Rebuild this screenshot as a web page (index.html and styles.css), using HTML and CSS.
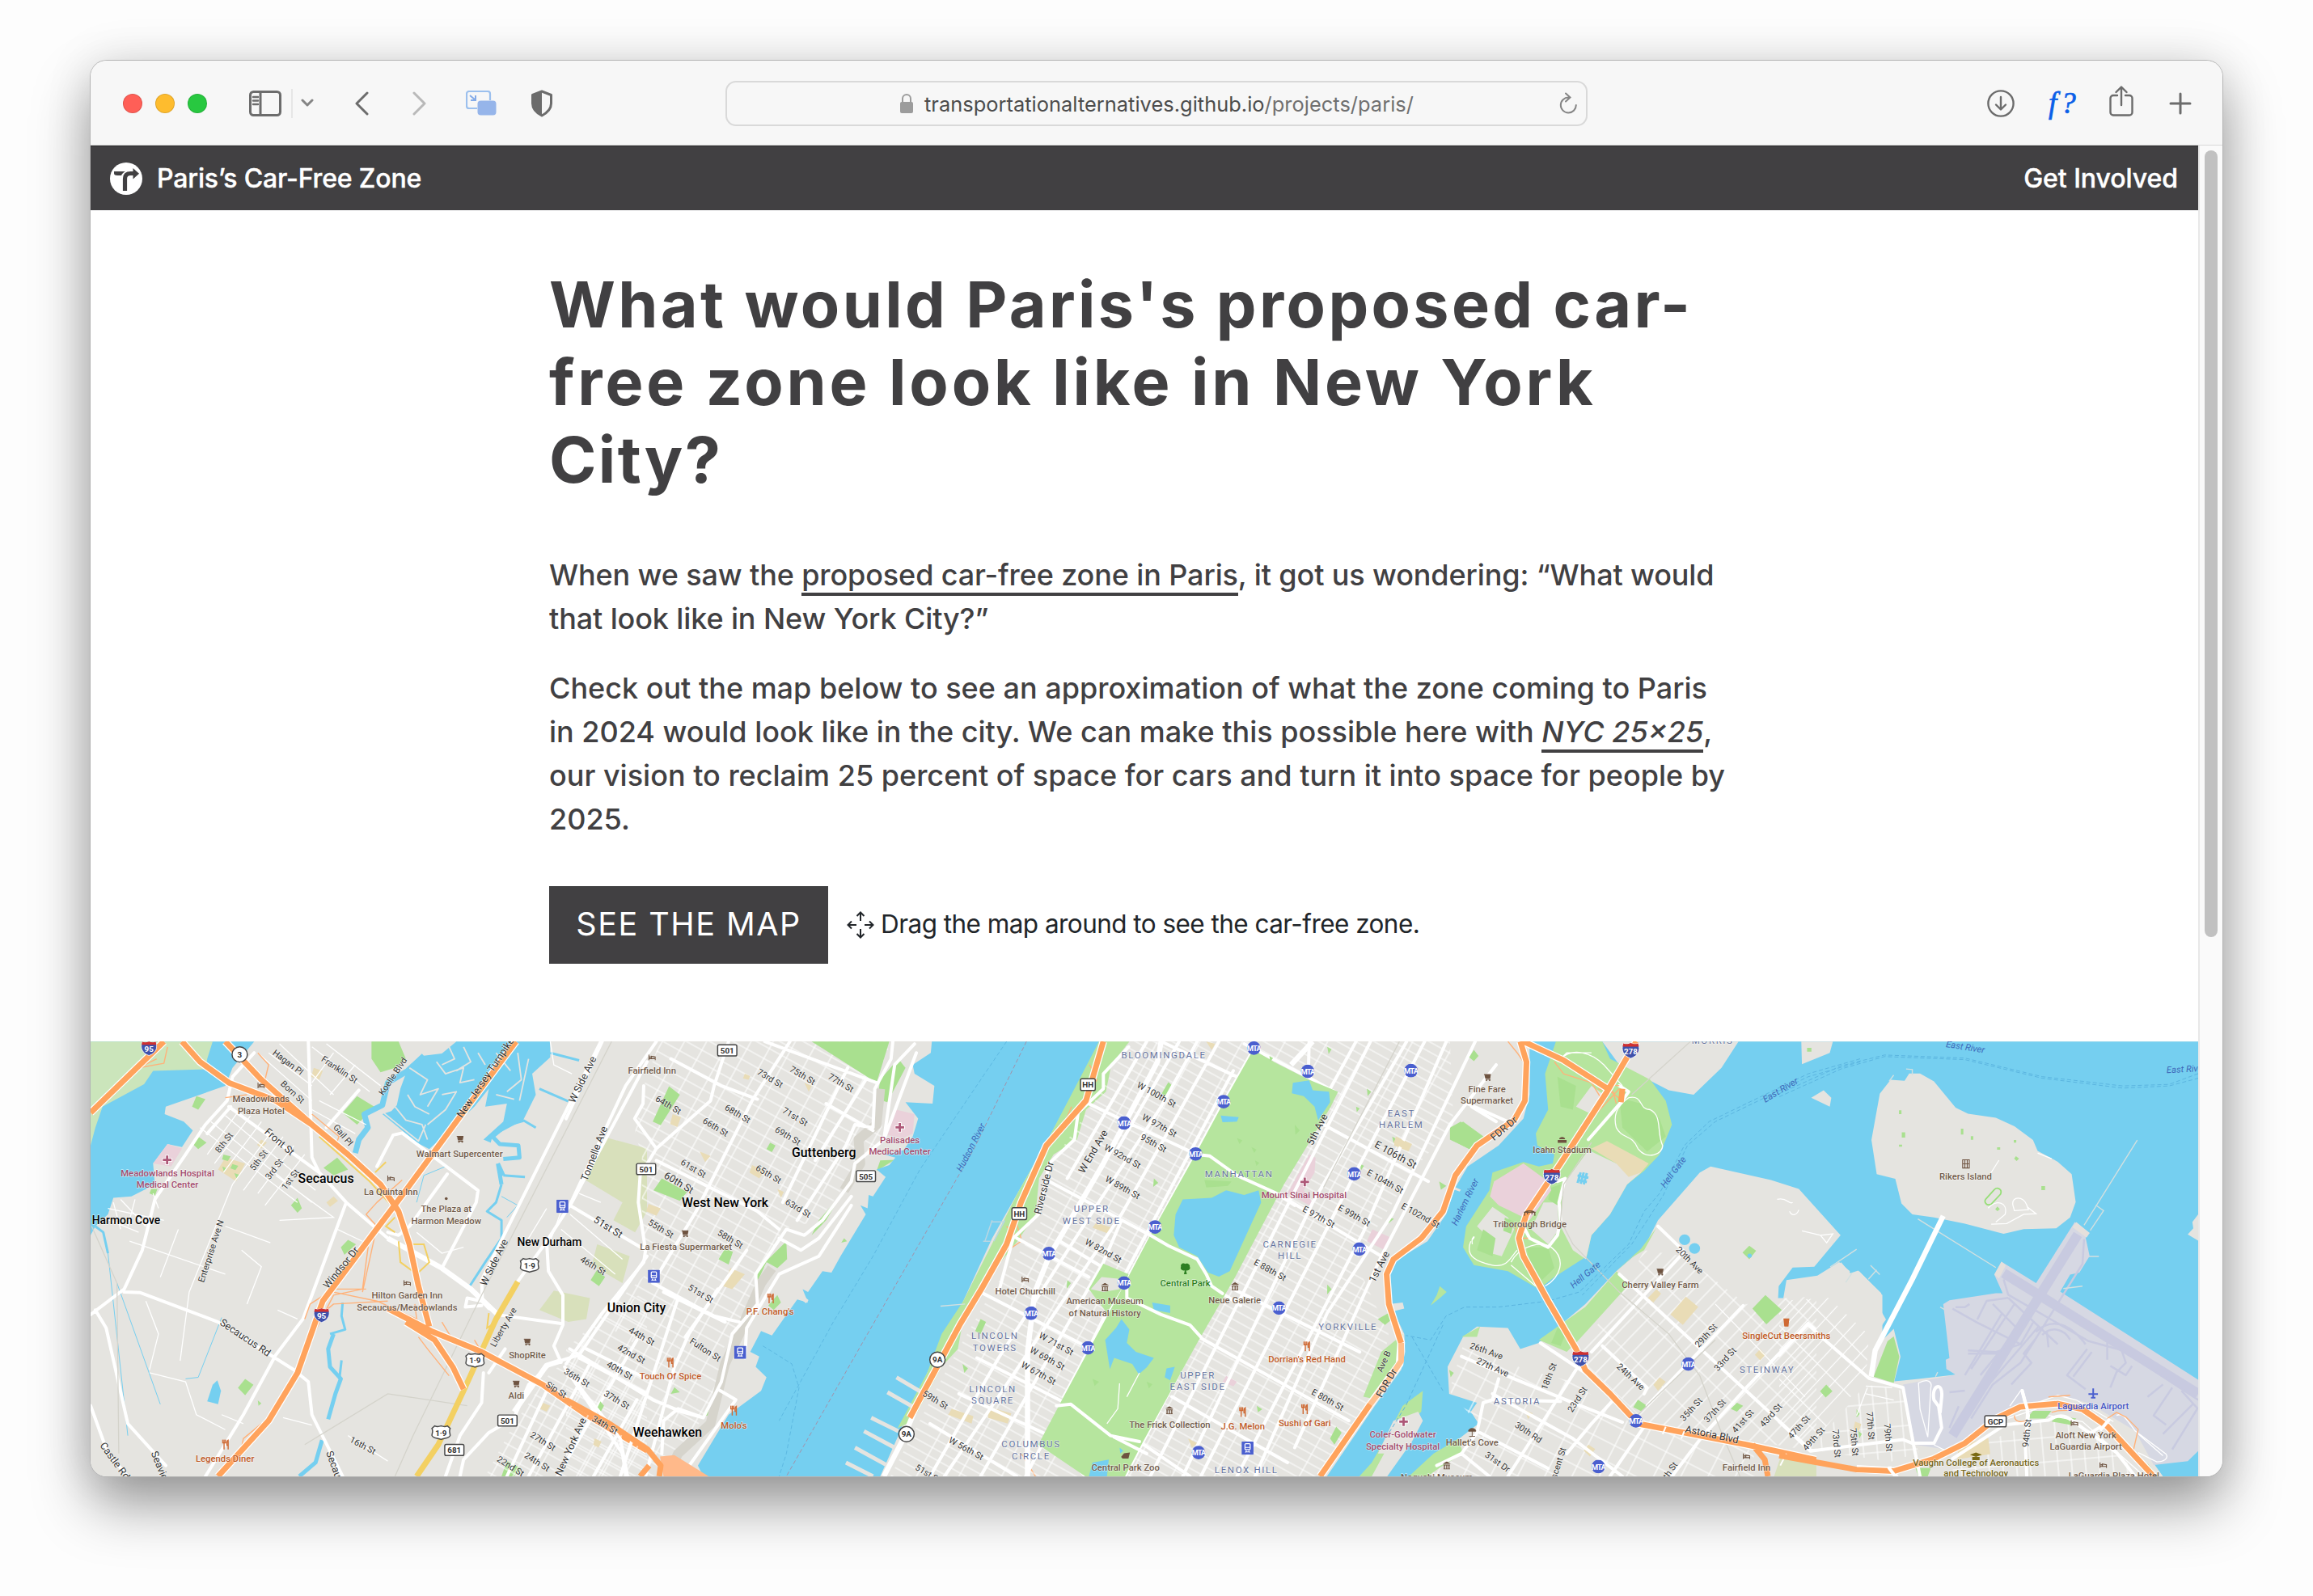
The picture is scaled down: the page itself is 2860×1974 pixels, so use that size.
FILE: index.html
```html
<!DOCTYPE html>
<html lang="en">
<head>
<meta charset="utf-8">
<title>Paris’s Car-Free Zone</title>
<link rel="stylesheet" href="styles.css">
</head>
<body>
<div class="window">
  <header class="toolbar">
    <div class="lights"><i class="red"></i><i class="amber"></i><i class="green"></i></div>
    <svg class="i-side" width="40" height="32" viewBox="0 0 40 32"><rect x="1.500" y="1.500" width="37" height="29" rx="4" class="s3"/><path class="s3" d="M14 1V31"/><path class="s2" d="M5 8h6M5 12.500h6M5 17h6"/></svg>
    <i class="divider"></i>
    <svg class="i-down" width="16" height="12" viewBox="0 0 16 12"><path class="s3 mid" d="M2 2l6 6 6-6"/></svg>
    <svg class="i-back" width="18" height="30" viewBox="0 0 18 30"><path class="s3" d="M16 2L3 15 16 28"/></svg>
    <svg class="i-fwd" width="18" height="30" viewBox="0 0 18 30"><path class="s3 pale" d="M2 2L15 15 2 28"/></svg>
    <svg class="i-pip" width="38" height="32" viewBox="0 0 38 32"><path d="M14 22H4a3 3 0 0 1-3-3V4a3 3 0 0 1 3-3h23a3 3 0 0 1 3 3v8" fill="none" stroke="#9cc0ee" stroke-width="2.200"/><rect x="14.500" y="12.500" width="23" height="18" rx="4" fill="#96b5ea"/><path d="M5 6l6 5M12 6v6H6" stroke="#84abe8" stroke-width="2" fill="none"/></svg>
    <svg class="i-shield" width="30" height="34" viewBox="0 0 30 34"><path class="s3" d="M15 2l11.500 4.500V17c0 7-4 11-11.500 15C7.500 28 3.500 24 3.500 17V6.500z"/><path fill="#6c6c6c" d="M15 2L3.500 6.500V17c0 7 4 11 11.500 15z"/></svg>
    <div class="address">
      <svg width="18" height="26" viewBox="0 0 18 26"><rect x="1" y="11" width="16" height="14" rx="2" fill="#9c9c9c"/><path d="M4 12V7a5 5 0 0 1 10 0v5" fill="none" stroke="#9c9c9c" stroke-width="2"/></svg>
      <span class="url">transportationalternatives.github.io<span>/projects/paris/</span></span>
      <svg class="reload" width="24" height="28" viewBox="0 0 24 28"><path d="M12.500 6.500A9.500 9.500 0 1 0 21.800 16M9 1.500l5.500 5-5.500 5" fill="none" stroke="#858585" stroke-width="2" stroke-linecap="round"/></svg>
    </div>
    <svg class="i-dl" width="34" height="34" viewBox="0 0 34 34"><circle class="s2" cx="17" cy="17" r="15.600"/><path class="s2" d="M17 9v15M11 18.500l6 6 6-6"/></svg>
    <span class="i-font">f?</span>
    <svg class="i-share" width="30" height="38" viewBox="0 0 30 38"><path class="s2" d="M10 12H5a3.500 3.500 0 0 0-3.500 3.500V33A3.500 3.500 0 0 0 5 36.500H25a3.500 3.500 0 0 0 3.500-3.500V15.500A3.500 3.500 0 0 0 25 12H20M15 24V2M8.500 8L15 1.500 21.500 8"/></svg>
    <svg class="i-plus" width="28" height="28" viewBox="0 0 28 28"><path class="s3" d="M14 2V26M2 14H26"/></svg>
  </header>

  <div class="viewport">
    <div class="page">
      <nav class="nav">
        <svg width="40" height="40" viewBox="0 0 40 40"><circle cx="20" cy="20" r="20" fill="#fff"/><path d="M18.500 35V20c0-4 2-6.500 7-6.500h4" fill="none" stroke="#414042" stroke-width="5.200"/><path d="M28.500 7l7.500 6.700-7.500 6.800z" fill="#414042"/><path d="M5 13.500c0 2 2 2.400 4 2.400h5c1-2 2.500-3.800 5-5H5z" fill="#414042"/></svg>
        <span class="brand">Paris’s Car-Free Zone</span>
        <span class="cta">Get Involved</span>
      </nav>
      <main class="intro">
        <h1><span class="l1">What would Paris's proposed car-</span><br><span class="l2">free zone look like in New York</span><br><span class="l3">City?</span></h1>
        <p class="lead">When we saw the <a>proposed car-free zone in Paris</a>, it got us wondering: “What would<br>that look like in New York City?”</p>
        <p>Check out the map below to see an approximation of what the zone coming to Paris<br>in 2024 would look like in the city. We can make this possible here with <a><em>NYC 25×25</em></a>,<br>our vision to reclaim 25 percent of space for cars and turn it into space for people by<br>2025.</p>
        <div class="actions">
          <button>SEE THE MAP</button>
          <svg width="34" height="34" viewBox="0 0 34 34"><path d="M17 2V12M17 22V32M2 17H12M22 17H32M12.500 6L17 1.500 21.500 6M12.500 28L17 32.500 21.500 28M6 12.500L1.500 17 6 21.500M28 12.500L32.500 17 28 21.500" fill="none" stroke="#212529" stroke-width="2"/></svg>
          <span>Drag the map around to see the car-free zone.</span>
        </div>
      </main>

      <svg class="map" width="2606" height="538" viewBox="112 1288 2606 538">
        <defs>
          <pattern id="st" width="46" height="11" patternUnits="userSpaceOnUse" patternTransform="scale(2.24 2.7034) rotate(29)"><path d="M0 5H46M20 0V11" class="pat"/></pattern>
          <pattern id="sn" width="24" height="14" patternUnits="userSpaceOnUse" patternTransform="scale(2.24 2.7034) rotate(29)"><path d="M0 5H24M12 0V14" class="pat"/></pattern>
          <pattern id="sq" width="15" height="46" patternUnits="userSpaceOnUse" patternTransform="scale(2.6133 2.7034) rotate(44)"><path d="M0 20H15M7 0V46" class="pat"/></pattern>
          <pattern id="sa" width="30" height="22" patternUnits="userSpaceOnUse" patternTransform="scale(2.6133 2.7034) rotate(27)"><path d="M0 10H30M15 0V22" class="pat"/></pattern>
          <pattern id="se" width="17" height="30" patternUnits="userSpaceOnUse" patternTransform="scale(2.6133) rotate(-5)"><path d="M0 15H17M8 0V30" class="pat"/></pattern>
          <symbol id="mta" viewBox="-9 -9 18 18"><circle r="8.800" fill="#4a5fcf"/><text class="mta-t" x="0" y="3.800">MTA</text></symbol>
          <symbol id="train" viewBox="0 0 16 18"><rect width="16" height="18" rx="1" fill="#4a5fcf"/><rect x="4.500" y="3" width="7" height="8" rx="1" fill="none" stroke="#fff" stroke-width="1.400"/><path d="M4.500 8h7M5 15l1.500-3M11 15l-1.500-3M5 14h6" stroke="#fff" stroke-width="1.200"/></symbol>
          <symbol id="is" viewBox="0 0 24 22"><path d="M2 1c3 1.500 7 1 10-.5C15 2 19 2.500 22 1c4 9 0 17-10 20.500C2 18 -2 10 2 1z" fill="#3f51ab" stroke="#fff"/><path d="M2 1c3 1.500 7 1 10-.5C15 2 19 2.500 22 1l1 4.500H1z" fill="#d0302f"/></symbol>
          <symbol id="us" viewBox="0 0 26 20"><path d="M5 1.500c3 1.500 5 1 8 0 3 1 5 1.500 8 0l3.500 3c-2 4 0 6 0 9-1 4-8 3-11.500 5-3.500-2-10.500-1-11.500-5 0-3 2-5 0-9z" fill="#fff" stroke="#4a4a4a" stroke-width="1.500"/></symbol>
          <symbol id="cart" viewBox="0 0 10 9"><path d="M0 1h8l-.8 4.500H2L1.300 2M2 7h6" fill="#6e5340" stroke="#6e5340"/><circle cx="3" cy="8" r="1" fill="#6e5340"/><circle cx="7" cy="8" r="1" fill="#6e5340"/></symbol>
          <symbol id="bed" viewBox="0 0 10 8"><path d="M.7 0V8M.7 5.800H9.500V8M9.500 6V3.500L4 2.500V5.500" fill="none" stroke="#6e5340" stroke-width="1.300"/><circle cx="2.400" cy="3.500" r="1" fill="#6e5340"/></symbol>
          <symbol id="fork" viewBox="0 0 9 12"><path d="M.7 0v4h3.600V0M2.500 0v12M7.500 12V.7C6 1.500 5.700 4 6 7h1.500" fill="none" stroke="#cf6a34" stroke-width="1.400"/></symbol>
          <symbol id="mus" viewBox="0 0 10 10"><path d="M0 3L5 0l5 3zM1 4h8v1H1zM1 9h8v1H1zM1.500 5h1.300v4H1.500zM4.400 5h1.300v4H4.400zM7.200 5h1.300v4H7.200z" fill="#6e5340"/></symbol>
          <symbol id="med" viewBox="0 0 12 12"><path d="M6 0v12M0 6h12" stroke="#fff" stroke-width="4"/><path d="M6 1v10M1 6h10" stroke="#ad5777" stroke-width="2.600"/></symbol>
        </defs>
        <rect x="112" y="1288" width="2606" height="538" fill="#e5e4e0"/>

        <!-- Secaucus and the Meadowlands -->
        <g class="g" transform="translate(100 1280) scale(.44643 .3699)">
          <path class="w" d="M27 22H480L420 110 400 170 330 200 235 240 232 265 285 290 310 320 280 375 240 365 200 430 205 500 140 540 90 545 75 600 40 640 27 670Z"/>
          <path fill="#cbe5bb" d="M27 22H365L350 80 345 115 200 120 175 165 60 240 40 310 27 370Z"/>
          <path class="p" d="M805 22H880L900 80 870 110 830 125 805 80ZM765 205L820 245 785 275 765 300 725 260ZM710 410L740 450 700 470 672 445ZM320 205L345 215 325 250 308 240ZM325 340L348 360 325 382 310 365ZM600 545L612 580 600 595 582 570ZM740 685L762 700 730 735 720 710ZM455 1150L478 1170 455 1205 435 1180ZM1430 785L1452 810 1435 840 1412 820ZM1180 1425L1220 1450 1200 1476H1165ZM195 515L212 515 205 538 190 530ZM490 1222L500 1232 492 1240Z"/>
          <path fill="#d8e0bb" d="M1460 345L1568 380V590L1535 660 1475 620 1500 560 1390 480ZM1430 700L1520 740 1500 830 1415 770ZM1310 855L1410 880 1400 950 1350 960 1270 920Z"/>
          <path class="t" d="M645 110L670 120 660 150 638 140ZM400 410L455 430 430 490 380 450ZM500 350L515 360 500 380 488 368ZM700 540L712 555 690 575 680 560ZM1280 1230L1300 1240 1290 1260 1272 1250ZM1420 1350L1440 1360 1425 1380Z"/>
          <path class="p" d="M395 400l20 6-8 16-16-6zM420 432l16 6-8 14-14-6zM392 440l12 6-8 12zM425 462l14 6-8 12z"/>
          <path fill="#ead1da" d="M240 365L280 380 250 440 200 430Z"/>
          <path class="w" d="M1040 22H1300V75L1250 130 1260 200 1225 285 1140 340 1135 360 1115 350 1170 290 1180 230 1120 240 1130 180 1090 240 965 382 930 360 835 265 860 255 875 235 885 180 900 130 945 70 1000 62Z"/>
          <path class="w" d="M378 1155L388 1190 380 1235 350 1225 365 1170Z"/>
          <path class="rv" stroke-width="7" d="M950 70L905 120 850 160 835 235 785 265 795 310 770 350 760 395"/>
          <path class="rv" stroke-width="5" d="M1225 285L1180 300 1140 340 1160 365 1212 370 1215 410 1170 415M1170 470L1155 430M1155 430L1165 500M700 1000L685 1050 690 1110 720 1150 705 1200 685 1285M668 1355L650 1430 605 1476"/>
          <path class="rv" stroke-width="3" d="M1230 475L1170 470M1165 500L1150 560 1125 590 1165 620 1165 680 1120 760 1078 838M725 895L722 940 732 985 690 1000M722 1088L716 1150M1300 60L1380 85M1270 180L1350 222M1225 285L1260 310M40 640L62 660 75 730"/>
          <path class="rv" stroke-width="1" d="M75 730L130 1340M930 560L950 470 1010 440M390 945L325 1145 290 1150M100 830L220 1235M1165 540L1210 570 1180 610"/>
          <path class="mk" d="M910 110L960 150 940 200 990 180 960 240M985 90L1010 130 1060 110 1050 160 1090 150M1000 200L1040 190 1010 250 960 300M1150 60L1190 120M1210 60L1220 150 1180 190M1240 80L1215 220M870 240L900 285 945 300 960 350M1060 40L1080 90 1040 120M840 262L935 355 955 300M905 200L925 240 965 265M1020 40L1035 80 1000 100M1100 60L1120 100M1150 200L1200 215"/>
          <path class="m" d="M490 60L640 220M520 60L640 170M550 30L700 200M640 40L800 190M680 30L830 170M700 60L640 160M760 100L690 200M440 250L350 400M470 270L370 430M500 290L395 460M530 320L420 500M560 340L450 520M590 370L490 530M620 400L510 570M330 310L600 560M360 290L640 560M400 270L650 520M640 250L760 330M660 220L790 300M75 580L230 620M110 550L180 640M60 610L160 660M90 560L110 650M150 550L130 640M200 530L215 580M135 690L400 800M420 500L300 860 275 1090M270 650L220 810M400 640L525 695M445 720L500 775 460 900M190 1120L215 1000 180 890M190 1130L290 1160 320 1270 400 1320M545 920L600 950M710 650L780 690M930 660L1000 730 1060 710M540 470L700 610 550 620M390 1270L450 1300M560 1280L640 1305M740 1340L850 1425M1380 530L1440 560M1330 590L1300 690M1355 600L1500 750M1330 650L1480 800M1290 580L1230 700M1300 22L1310 100 1360 130"/>
          <path class="r" d="M630 22L640 410 660 460 735 560 850 680 1000 780 1080 850 1130 915M410 240L660 460M480 60L420 140 405 220 345 300 290 400 205 550 170 720 120 850 27 935M350 330L415 240M735 560L640 870 615 950 540 1070 450 1270 345 1476M120 860L165 862 380 960 590 1120 630 1160 640 1270 725 1476M40 920L70 980 130 1300 235 1440M27 1240L75 1400 130 1476M680 310L770 185M820 440L865 335 890 328 1100 520 1095 560 1000 780M1015 465L910 640 880 670 850 660M1440 22L1180 650 1110 820 1112 890M1568 90L1360 560 1290 690 1210 825M1290 690L1295 790 1335 870V970L1310 1040 1330 1095M1150 935L1330 965M1110 890L1070 880 1065 910 1110 905M1115 1130L1110 1230 1050 1340 1010 1476M1130 1130L1175 1050M1380 1080L1568 1200M1400 1050L1568 1150M1568 740L1380 1070 1300 1100 1240 1170 1200 1280 1130 1330 1060 1420 1050 1476M1300 1165L1180 1476M1340 1110L1500 1400 1510 1476M1410 1100L1240 1476M1540 1020L1320 1476M1540 1220L1420 1476"/>
          <path class="b" d="M850 680L1000 780 1080 850 1150 930M1330 1090L1290 1105 1200 1260"/>
          <path class="rail" d="M1470 22L1110 870 920 1340 870 1476M620 1370L850 1200 1070 1240M30 640L100 830 105 1400"/>
          <path fill="url(#sn)" d="M1380 1060L1568 1150V1476H1120L1200 1300 1300 1130ZM1568 850L1440 960 1568 1060Z"/>
          <path class="yw" stroke-width="7" d="M1210 825L1150 950 1060 1190 990 1370 930 1476"/>
          <path class="yw" stroke-width="2" d="M660 340L800 490 860 570M880 580L905 690 945 860 965 960M845 425L815 460M870 610L845 640 870 660M880 690L885 760 930 800 965 760 950 700 920 700M1130 930L1125 980 1150 960"/>
          <path class="ramp" d="M490 60L520 100 510 150M400 210L460 200M640 265L715 340 705 370M890 485L820 560 790 600 820 640 780 860M240 40L230 95 160 110 210 80M620 950L635 900 700 850 790 850M640 960L700 900 850 890M645 1000L700 870 780 850 800 670M700 860L820 890 930 950M925 900L930 950 970 1010M935 1010L960 1050 1020 1140M1000 960L1030 1020M1090 1020L1110 1060M500 1300L450 1350 440 1410"/>
          <path class="case" d="M27 260L230 22M280 22L330 90 410 160 540 220 640 300 740 400 830 500 880 590 910 700 935 840 965 975M400 22L500 150 640 300M1205 22L1040 290 900 520 800 680 670 890 600 1130 520 1290 380 1476M850 915L970 990 1110 1060 1280 1170 1400 1270 1568 1390M900 960L980 1020 1030 1110 1060 1185"/>
          <path class="h" d="M27 260L230 22M280 22L330 90 410 160 540 220 640 300 740 400 830 500 880 590 910 700 935 840 965 975M400 22L500 150 640 300M1205 22L1040 290 900 520 800 680 670 890 600 1130 520 1290 380 1476M850 915L970 990 1110 1060 1280 1170 1400 1270 1568 1390M900 960L980 1020 1030 1110 1060 1185"/>
        </g>

        <!-- Union City, West New York and the Hudson -->
        <g class="g" transform="translate(700 1280) scale(.44643 .3699)">
          <path fill="url(#sn)" d="M260 22H900L850 180 880 330 800 460 700 620 600 650 520 850 480 960 430 1060 420 1200 380 1280 260 1476H0V1050L240 780 210 640V400L190 330 220 150Z"/>
          <path class="p" d="M680 22H895L860 160ZM920 80L940 110 890 225 862 215 870 150ZM285 172L315 200 262 302 240 290ZM265 480L335 525 315 555 242 520ZM440 715L462 725 450 768 422 750ZM610 690L612 750 585 780 555 760 520 850 535 780ZM765 530L720 620 680 670 700 620ZM585 870L595 895 575 920 560 905ZM300 1178L315 1195 290 1200ZM95 1225L105 1240 95 1262 85 1250ZM870 420L910 418 860 455ZM430 1180L400 1270 385 1275ZM770 680L778 690 762 695ZM565 360L580 370 570 392 555 382Z"/>
          <path class="t" d="M370 390L400 405 385 425ZM515 435L550 455 535 480 508 460ZM228 565L262 580 250 605 222 590ZM295 265L318 275 308 308 288 298ZM455 780L495 800 460 850 435 840ZM660 160L680 170 672 190ZM80 1350L98 1360 90 1380 75 1370ZM495 130L510 138 505 150 490 145ZM585 515L603 525 595 545Z"/>
          <path class="hill" stroke-width="12" d="M870 180L860 300 810 350 815 430 770 520M570 780L540 830 500 940 480 1000 440 1100 400 1300 310 1400 280 1476"/>
          <path class="w" d="M1013 22L1010 60 960 100 965 130 1020 170 1015 230 940 225 975 280 960 340 935 385 880 400 912 410 895 435 860 450 885 475 850 540 838 535 835 580 815 570 830 600 760 740 735 795 710 790 670 860 655 850 670 895 640 885 570 1005 540 990 510 1060 535 1075 525 1110 555 1145 540 1190 450 1270 410 1350 365 1440 380 1476H870L920 1340 940 1280 1000 1130 1100 890 1180 680 1250 530 1330 360 1450 90 1476 22Z"/>
          <path fill="#ead1da" d="M915 250L965 265 960 330 935 345 890 335Z"/>
          <path class="p1" d="M1476 22H1560L1510 100 1495 190 1440 250 1415 350 1350 400 1310 480 1300 600 1250 690 1190 780 1150 860 1100 950 1085 1050 1040 1110 960 1290 918 1315 1000 1130 1040 1000 1100 890 1250 530 1330 360Z"/>
          <path class="pier" d="M915 1145L985 1195M890 1195L970 1250M845 1280L920 1325M825 1325L910 1380M800 1380L890 1440M775 1430L850 1476M640 865L668 892"/>
          <path class="pier2" d="M1037 907L1105 900"/>
          <path class="r" d="M100 22L0 280M250 22L165 170 10 570M215 170L213 230 190 280 220 330 250 380M290 80L430 170 530 215M450 22L410 170 400 220 250 380 205 470 200 560 220 720 215 760 100 930 0 1100M620 22L515 220 360 590 240 830M905 22L900 80 855 180 850 310 800 300 775 370 640 620M965 30L910 100 880 350 800 430 790 490 710 620 660 670 610 650 525 800 530 900 460 1000 430 1160 380 1280 310 1250 270 1290 265 1400M970 60L880 350M790 540L700 680 650 720 590 680M790 570L700 740 590 800 500 980 495 1080M550 22L860 160M720 230L850 320M250 420L530 590 590 650M10 570L220 720M240 830L410 940 480 960M270 860L440 960M420 850L340 1000 300 1110 220 1476M310 880L150 1476M10 1050L240 1220 320 1260 380 1280M420 1185L470 1220 400 1340 320 1476M0 1120L150 1350 170 1476M500 720L330 1010M780 110L600 560M830 150L690 420"/>
          <path class="dash" stroke="#a391a9" d="M1275 22L1130 380 830 1010 610 1476"/>
          <path class="dash" stroke="#5db9e2" d="M1220 22L980 450 850 740 740 960 590 1290M545 1040L625 1100 645 1180 610 1400 590 1476"/>
          <path fill="#ffb98a" d="M260 1410L300 1405 395 1476H270Z"/>
          <path class="hh" d="M0 1220L120 1300 225 1385 262 1440 258 1476M205 1476L230 1440"/>
          <path class="ramp" d="M1450 100L1470 150 1440 210M1400 240L1375 310M1220 640L1260 690 1200 740M1240 600L1260 680M1260 1400L1300 1476"/>
          <path fill="none" stroke="#b9d6e2" stroke-width="1.500" d="M1180 620L1160 690M1215 620L1185 690M1180 625H1215M1155 690H1175"/>
        </g>

        <!-- Manhattan and Central Park -->
        <g class="g" transform="translate(1150 1280) scale(.44643 .3699)">
          <path fill="url(#st)" d="M550 22H1440L1450 300 1340 450 1250 620 1180 760 1270 1000 1240 1200 1070 1476H-110L50 1110 170 860 310 620 330 440 480 180Z"/>
          <path class="p" d="M660 158L672 170 655 210 642 195ZM620 480L632 495 618 508ZM1440 310L1470 290 1540 350 1510 390 1440 350ZM140 950L155 960 140 1000 125 990ZM90 1100L105 1115 95 1130ZM1270 610L1285 615 1270 630ZM1270 930L1280 950 1260 970 1240 950ZM1125 1310L1140 1330 1120 1370 1108 1350ZM905 1240L920 1252 908 1262ZM1100 835L1112 850 1100 868ZM1410 490L1430 505 1415 518ZM1210 180L1222 190 1212 205ZM380 820L390 830 378 850ZM1280 340l12 8-8 14zM1180 240l10 6-8 12zM1100 40l12 8-8 16zM1190 430l12 8-8 14z"/>
          <path class="t" d="M460 628L505 645 495 665 450 645ZM60 1250L120 1275 115 1300 50 1270ZM165 1245L225 1265 215 1300 160 1280ZM1290 340L1335 365 1325 390 1285 370ZM715 1350L740 1365 725 1380ZM765 22L790 30 780 50Z"/>
          <path fill="#ead1da" d="M1050 400L1068 410 1065 460 1035 520 1060 560 1050 570 990 530ZM1225 650L1280 680 1260 720 1210 690ZM820 1140L850 1160 840 1175 810 1160Z"/>
          <path class="p1" d="M1250 1060L1310 1000 1310 1090 1240 1220 1200 1210Z"/>
          <path class="b" d="M1060 22L1000 100M640 22L630 90 480 430 330 740 290 860 270 1060V1476"/>
          <path class="r" d="M600 22L380 480M740 22L640 240 440 610 190 1080 0 1476M800 22L530 600 40 1476M690 22L510 400M550 40L480 130 480 180 410 260 400 350 330 430 300 600 230 680 190 860M530 620L480 760 140 1476M840 120L540 800 310 1370 265 1476M895 50L820 210 540 830 370 1210M1180 22L990 440 590 1360 540 1476M1220 22L610 1476M1320 22L1060 560 700 1476M1370 22L1170 480 750 1476M1430 22L1200 660 850 1476M1510 22L1280 600 1100 930 900 1476M1568 100L1440 300 1250 740 1010 1380M1050 22L1048 120M440 230L560 300 740 400M330 490L610 670M870 30L1060 150 1120 190M640 22L850 140M1090 300L1380 490M920 500L1250 740M240 680L440 810M360 690L550 830M140 860L430 1040M780 840L860 905M840 850L1190 1060M730 1000L1160 1290M130 1080L390 1240M670 1210L990 1430M580 1360L720 1476M80 1200L330 1340 430 1476M0 1300L240 1476M1500 240L1568 290"/>
          <path class="p1" d="M895 50L960 95 1050 150 1130 190 1110 240 980 500 845 810 740 1030 590 1360 540 1476H430L300 1370 370 1210 540 830 610 670 735 400 820 210ZM480 765L550 800 540 830 490 930 440 850Z"/>
          <path fill="#e5e4e0" d="M475 810L520 815 525 850 480 860 445 850Z"/>
          <path class="p" d="M940 70l10 8-8 12zM1010 300l14 20-12 14zM850 345l15 8-8 12zM890 375l14 8-6 12zM870 460l15 10-12 12zM900 420l12 8-8 10zM450 1150l18 10-12 14zM600 1160l16 8-10 14zM760 485l75 5-10 15-60 5z"/>
          <path class="w" d="M700 550L780 545 820 520 870 535 910 520 917 560 830 790 800 808 770 795 740 740 690 710 675 670 680 600ZM1005 160L1050 152 1060 185 1105 190 1108 225 1075 285 1065 240 1035 205 1002 195ZM805 270L855 275 850 290 810 292ZM530 950L552 985 545 1030 570 1060 620 1080 600 1112 578 1135 560 1100 510 1080 498 1118 485 1020 515 980ZM615 895L665 905 665 930 620 920ZM655 1115L678 1110 665 1155 650 1145ZM450 1430L495 1420 490 1476H440ZM525 1380L535 1390 527 1400Z"/>
          <path class="r" d="M740 400L775 405 850 470 960 530 1010 570M610 670L660 705 740 750 765 800 780 840 810 865M545 830L545 880 640 935 720 970 750 1010M350 1240L390 1235 500 1340 580 1360M510 1345L600 1400"/>
          <path class="m" d="M580 1130L545 1210M525 1165L520 1250 490 1300"/>
          <path class="rail" d="M1300 22L1090 510"/>
        </g>

        <!-- Highway along the Hudson, over the west side parks -->
        <g class="g" transform="translate(700 1280) scale(.44643 .3699)">
          <path class="b" d="M975 1230L930 1360 880 1476"/>
          <path class="case" d="M1488 22L1440 220 1330 370 1260 560 1220 700 1150 850 1090 970 952 1280"/>
          <path class="h" d="M1488 22L1440 220 1330 370 1260 560 1220 700 1150 850 1090 970 952 1280"/>
        </g>

        <!-- East River, islands and Astoria -->
        <g class="g" transform="translate(1700 1280) scale(.38265 .3699)">
          <path class="w" d="M500 22V200L480 280 400 370 300 440 260 510 230 600 170 690 60 760 50 800 50 900 95 1000 98 1060 85 1120 0 1240-155 1476H2670V22Z"/>
          <path fill="#e5e4e0" d="M45 900L90 895 95 915 55 925ZM735 22H1175L1120 110 1030 200 950 185 790 100ZM1378 22H1480L1470 60 1380 98ZM1410 210L1450 185 1475 210 1470 240ZM250 505L278 518 274 524 250 515Z"/>
          <path class="p1" d="M585 22H735L760 80 890 150 940 220 960 300 920 400 870 455 815 500 760 600 700 670 685 740 580 810 530 850 430 790 320 770 285 710 295 640 370 520 380 460 480 425 530 440 575 430 580 400 525 370 520 330 560 250 550 130ZM210 840L232 860 210 880 180 905 200 870Z"/>
          <path fill="#e5e4e0" d="M690 385L780 430 860 460 815 500 760 600 700 670 682 750 640 720 600 640 610 500ZM380 575L430 610 450 650 410 740 375 730 380 690 330 640ZM700 170L740 200 690 260 650 240ZM545 560L590 560 595 650 560 700 505 650Z"/>
          <path class="p" d="M590 140L650 170 640 250 600 240ZM790 210L860 230 920 280 940 340 880 390 800 310ZM350 650L390 680 380 740 330 720ZM420 610L450 625 440 665 415 655ZM490 710L560 710 580 780 540 820 500 760ZM570 510L600 500 590 570 560 550Z"/>
          <path class="t" d="M700 380L750 355 885 430 860 460 820 475 780 430Z"/>
          <path fill="#ead1da" d="M372 540L385 490 480 430 560 490 570 520 500 620 400 570Z"/>
          <path class="rv" stroke-width="3" d="M665 460L655 495M675 460L665 498M685 462L675 500M655 470L690 478M655 485L685 492"/>
          <path fill="#e5e4e0" d="M915 620L1050 460 1085 440 1280 485 1370 515 1505 670 1420 775 1350 778 1305 840 1303 880 1320 880 1330 820 1430 805 1500 760 1535 790 1525 825 1565 790 1640 870V1476H130L200 1420 260 1360 335 1300 310 1260 330 1230 240 1200 235 1110 285 1010 330 975 430 980 470 1050 530 1030 680 900 780 790 870 710Z"/>
          <path fill="url(#sq)" d="M870 720L1000 740 1200 900 1330 880 1520 870 1568 880V1290L1440 1300 1410 1390 880 1300 640 1060 780 900Z"/>
          <path fill="url(#sa)" d="M290 1020L400 1090 530 1130 640 1160 830 1300 960 1320 1220 1390 1240 1476H160L290 1400 340 1310 240 1190Z"/>
          <path class="p1" d="M910 645L870 720 830 745 780 790 825 830 650 1030 620 1060 530 1020 680 910 790 780 860 715ZM155 1190L150 1260 80 1330 60 1400 30 1440-10 1476H-50L-10 1430 40 1340 90 1240ZM270 1350L285 1400 220 1440 170 1476H110L190 1400ZM340 975L330 1010 280 1010Z"/>
          <path fill="#e5e4e0" d="M60 1290L140 1260 155 1290 120 1360 40 1476H-10L30 1400 10 1400Z"/>
          <path class="p" d="M1262 870L1315 920 1265 968 1220 915ZM1210 705L1232 722 1210 750 1188 728ZM1460 1170L1480 1190 1455 1210 1440 1190ZM590 980L620 990 600 1040 570 1030ZM240 1120L255 1130 245 1145ZM250 320L285 290 365 350 320 390 245 350ZM850 1220L880 1240 860 1258 835 1245ZM1170 1230L1190 1240 1170 1260 1150 1250ZM320 50L335 70 320 88 305 75Z"/>
          <path class="t" d="M1005 875L1045 910 995 970 955 935ZM910 850L925 865 900 895 882 880ZM920 1145L940 1160 915 1190 900 1170ZM1245 1050L1262 1070 1245 1088 1228 1070ZM690 1370L712 1385 695 1410 675 1390ZM485 1255L510 1265 495 1285ZM70 340L110 365 100 385 60 360Z"/>
          <path fill="#d8e0bb" d="M1310 1415L1568 1460V1476H1290Z"/>
          <circle class="w" cx="1001" cy="685" r="18"/><circle class="w" cx="1033" cy="714" r="18"/><circle class="w" cx="1211" cy="738" r="7"/>
          <path class="m" d="M600 80C640 40 700 60 740 100L800 170M590 90L620 60 700 60M820 210C870 200 850 250 890 250 930 270 910 330 930 370 930 400 880 420 850 380 830 330 800 350 780 310 770 270 780 240 820 210M310 690C290 740 330 760 380 770 430 780 440 740 460 720M440 760C470 700 540 690 570 710 620 750 600 810 550 840M440 770L520 840M315 685C330 670 310 670 315 700M1300 550C1330 540 1340 570 1350 560M1340 590C1350 610 1365 600 1370 585M1380 655L1440 670 1480 665 1460 695 1440 670M1100 900L1390 1210"/>
          <path class="r" d="M480 640L500 680 560 710 590 670 600 620 595 560 615 480 590 490M690 350L800 220 820 190 790 170M915 640L1000 725 700 1060M790 800L1200 1190 1410 1390 1568 1375M1190 905L880 1240M1400 965L1200 1180 1060 1340 960 1476M1400 965L1568 1110M535 1030L680 1130 840 1290M280 1075L450 1150 640 1230 800 1295M650 1120L430 1476M735 1040L880 1180 870 1200M400 1150L380 1220 350 1230 330 1330 280 1400 200 1440M380 1200L640 1350 800 1476M340 1330L560 1450M600 1225L380 1220M280 1400L370 1476M620 1400L700 1300 780 1210M870 1310L760 1476M300 230L430 290"/>
          <path class="rail" d="M1020 22L830 200M700 360L610 500 600 620 640 700 790 860 950 1000 1050 1140 1120 1330 1180 1476M840 1280L1100 1020"/>
          <path class="dash" stroke="#5bb5e0" d="M1568 80L1400 130 1220 220 1080 290 1000 370 920 530 870 590 820 700 660 860 560 890 400 910H290L230 940 180 1020 100 1005M1568 90L1400 140 1100 290 1010 370 930 540 830 700 670 870M120 1010L220 1190M220 970L100 1240 40 1340"/>
          <path class="ramp" d="M430 22L460 60 480 90M580 90L610 130 700 160 790 170M590 70L700 140 800 220M700 160L730 210 690 290M720 180L770 190 780 230M640 380L700 280 790 180M455 640L460 680H495"/>
          <path class="case" d="M470 22L490 90 485 220 450 285 330 370 260 470 220 590 150 680 60 750 38 800 45 900 85 1030 80 1100-15 1235-177 1476M480 22L610 85 760 185M845 22L750 190 600 430 490 600 465 680 480 740 560 890 650 1050 680 1120 760 1200 850 1300 1200 1370 1400 1415 1580 1455"/>
          <path class="h" d="M470 22L490 90 485 220 450 285 330 370 260 470 220 590 150 680 60 750 38 800 45 900 85 1030M-15 1235L-177 1476M480 22L610 85 760 185M800 180L795 225M845 22L750 190 600 430 490 600 465 680 480 740 560 890 650 1050 680 1120 760 1200 850 1300 1200 1370 1400 1415 1580 1455M1220 1370L1260 1420 1270 1476"/>
          <path class="h faded" d="M85 1030L85 1090 40 1160-15 1235"/>
          <path stroke="#fff" stroke-width="2" fill="none" d="M940 1310L930 1335M1000 1325L990 1350M1330 1400L1310 1440"/>
        </g>

        <!-- Rikers Island and LaGuardia -->
        <g class="g" transform="translate(2200 1280) scale(.38265)">
          <path fill="#e5e4e0" d="M325 190L360 145 405 148 420 125 455 125 500 150 570 235 610 255 700 268 760 295 820 340 835 375 900 410 945 450 958 540 940 590 895 625 790 628 725 643 600 610 500 590 430 580 395 545 375 465 315 450 298 340ZM200 735L230 770 255 762 330 835 300 880 325 885 345 920 310 970 330 990 370 950 392 1040 372 1120 450 1112 570 1098 1000 1100 1150 1260 1212 1388 1240 1427H120V800ZM1354 580L1335 605 1338 625 1320 645 1354 665Z"/>
          <path fill="url(#se)" d="M280 1130L400 1150 450 1350 360 1380 100 1340ZM560 1360L830 1250 950 1240 1180 1427H560Z"/>
          <path fill="url(#sq)" d="M0 860L160 850 290 970 280 1110 100 1330 0 1250Z"/>
          <path fill="#d6d8e3" d="M530 870L550 858 700 835 722 835 695 775 718 733 830 802 955 605 1003 640 990 655 1003 715 970 768 940 775 908 830 1354 1115V1345L1320 1378 1210 1390 1150 1280 1000 1190 900 1165 790 1200 600 1310 540 1340 440 1325 400 1130 570 1098 540 1080 538 1050 550 1045Z"/>
          <path fill="#e5e0dc" d="M695 775L718 733 732 745 710 788ZM960 605L1003 640 993 655 948 622Z"/>
          <path class="run" stroke-width="12" d="M725 770L1354 1160"/>
          <path class="run" stroke-width="12" d="M965 645L560 1295"/>
          <path class="run" stroke-width="2.500" d="M725 790L740 840 1000 990 1110 1020 1354 1180M640 920L670 860 740 850M560 885L640 930 780 1000M570 880H600L615 870M610 1020L700 1025 780 1000 820 930M610 1030H740M620 1080L760 870M600 1100L720 900M650 1100L830 880M660 1150L840 940M985 660L980 740 780 1060 690 1130 620 1240M830 960C870 920 930 920 990 1000M850 970C880 940 920 950 940 985M830 980L790 1030 815 1060 750 1130M865 960L870 1010M995 1015L930 1100 990 1145M1010 1025L950 1105M1100 1000L1120 1060 1090 1090 1070 1140M1140 1070L1120 1100 1070 1070M1240 1130L1190 1170M1270 1140L1210 1230 1250 1260M1340 1190L1240 1290M1350 1210L1270 1340M550 1155L600 1150M580 1200L550 1270M740 850L900 1000M690 870L780 960M1060 990V1050M1300 1150L1354 1210"/>
          <path class="pier2" d="M1157 340L985 615M1023 550L1048 568 1005 632M448 595L700 752M165 750L250 693M295 745L325 775M315 760L288 790M215 800L235 770M918 820L980 812M1000 716H1033M355 150L370 130M430 130V112L410 110M520 880L535 888M505 1105L512 1090"/>
          <path class="p" d="M370 975L388 1040 370 1125 305 1105 350 990ZM152 1130L172 1152 150 1172 132 1152ZM90 42h14v12h-14zM387 244h8v12h-8zM396 315h11v17h-11zM387 355h10v6h-10zM587 303h8v19h-8zM619 327h8v12h-8zM704 363h10v8h-10zM765 392l10 8-8 8-8-8zM847 489h12v13h-12zM705 555l8 8-8 7-7-7zM758 340h8v8h-8zM820 1215H880L860 1240 800 1240ZM900 1230L960 1240 940 1260 880 1250ZM250 1210l10 15-10 12zM255 1280l12 10-8 14zM440 1400L490 1400 480 1427H450ZM1190 1385L1225 1427H1200Z"/>
          <path class="t" d="M245 1250L265 1258 258 1280 240 1275ZM580 1330L675 1300 682 1355 575 1372Z"/>
          <path fill="none" stroke="#97de78" stroke-width="1.800" d="M668 530L695 500C705 490 722 500 715 515L685 547C670 555 660 540 668 530Z"/>
          <path class="m" d="M710 405L685 445M675 560C700 530 740 540 730 580L700 605M755 550C750 520 790 520 800 550L805 565 760 568ZM800 555L830 578 790 580 735 610 685 612M835 382L880 400M280 1135L365 1140M280 1160L370 1180M285 1140L250 1230M450 1125C480 1110 495 1120 490 1140L480 1300 455 1210ZM500 1325L540 1345M745 1200L780 1150M830 1190L900 1165 960 1180 1080 1250M740 1240L860 1200M1090 1230C1110 1220 1120 1240 1150 1280L1250 1355C1260 1370 1240 1380 1220 1380L1160 1350M1160 1290L1240 1360M870 1230L980 1250 1180 1427"/>
          <path class="b" d="M530 585L430 790 310 1020 297 1105"/>
          <path class="r" d="M0 1035L92 935 140 980 290 1110 400 1140 435 1330 455 1427M0 1250L100 1345 400 1308 430 1320 500 1320 525 1270 515 1200 500 1180C490 1130 530 1120 525 1170L520 1220M785 1150L805 1230 795 1320 800 1427M560 1370L730 1260 870 1245C930 1210 940 1250 1010 1290L1090 1350 1150 1427M360 1400L380 1427M1000 1290L1050 1260"/>
          <path class="ramp" d="M760 1230C760 1250 780 1255 800 1245M880 1220L900 1215 1000 1210M1060 1240L1090 1220 1120 1235 1160 1275 1145 1340M870 1170L940 1165"/>
          <path class="case" d="M250 1403L370 1410 500 1370 600 1320 700 1240 780 1202 900 1192 980 1210 1060 1265 1210 1427"/>
          <path class="h" d="M0 1360L100 1378 250 1405 370 1410 500 1370 600 1320 700 1240 780 1202 900 1192 980 1210 1060 1265 1210 1427"/>
          <path class="r" d="M785 1150L803 1215 800 1260M355 1400L375 1427M1040 1275L1065 1245"/>
          <path class="dash" stroke="#5bb5e0" d="M0 190L200 100 340 65 600 75 850 135 1110 165 1260 160 1354 125M0 200L200 110 340 70 600 80 850 140 1110 172 1260 165 1354 140"/>
        </g>

        <!-- Labels and markers -->
        <g class="labels" transform="scale(1.82398)">
          <g class="city"><text x="221" y="802">Secaucus</text><text x="85.500" y="830" class="c2">Harmon Cove</text><text x="372.500" y="845" class="c2">New Durham</text><text x="431.500" y="890">Union City</text><text x="491.500" y="818.500">West New York</text><text x="558.500" y="784.500">Guttenberg</text><text x="452.500" y="974.500">Weehawken</text></g>
          <g class="hood"><text x="789" y="717.800">BLOOMINGDALE</text><text x="740" y="822">UPPER</text><text x="740" y="829.800">WEST SIDE</text><text x="840" y="798.500">MANHATTAN</text><text x="950" y="757">EAST</text><text x="950" y="764.800">HARLEM</text><text x="874.500" y="846">CARNEGIE</text><text x="874.500" y="853.500">HILL</text><text x="913.800" y="901.800">YORKVILLE</text><text x="674.500" y="908">LINCOLN</text><text x="674.500" y="916">TOWERS</text><text x="673" y="944">LINCOLN</text><text x="673" y="952">SQUARE</text><text x="699" y="981.500">COLUMBUS</text><text x="699" y="989.500">CIRCLE</text><text x="812" y="934.500">UPPER</text><text x="812" y="942.500">EAST SIDE</text><text x="845" y="999">LENOX HILL</text><text x="1028.500" y="952.500">ASTORIA</text><text x="1198" y="931">STEINWAY</text><text x="1161" y="708">MORRIS</text></g>
          <g class="poi"><text x="177" y="747.500">Meadowlands</text><text x="177" y="755.300">Plaza Hotel</text><text x="311.500" y="784.500">Walmart Supercenter</text><text x="265" y="810.500">La Quinta Inn</text><text x="302.500" y="822">The Plaza at</text><text x="302.500" y="830">Harmon Meadow</text><text x="276" y="880.500">Hilton Garden Inn</text><text x="276" y="888.500">Secaucus/Meadowlands</text><text x="357.500" y="921">ShopRite</text><text x="350" y="948.500">Aldi</text><text x="442" y="728">Fairfield Inn</text><text x="465" y="847.500">La Fiesta Supermarket</text><text x="695" y="877.500">Hotel Churchill</text><text x="749" y="884.500">American Museum</text><text x="749" y="892.300">of Natural History</text><text x="837" y="883.800">Neue Galerie</text><text x="793" y="968">The Frick Collection</text><text x="763" y="997">Central Park Zoo</text><text x="1008" y="740.500">Fine Fare</text><text x="1008" y="748.300">Supermarket</text><text x="1059" y="782">Icahn Stadium</text><text x="1037" y="832.500">Triborough Bridge</text><text x="1125.500" y="873.500">Cherry Valley Farm</text><text x="998" y="980">Hallet's Cove</text><text x="1184" y="997.500">Fairfield Inn</text><text x="1332.500" y="800">Rikers Island</text><text x="1414" y="975.500">Aloft New York</text><text x="1414" y="983">LaGuardia Airport</text><text x="1433" y="1002.500">LaGuardia Plaza Hotel</text><text x="974" y="1004">Noguchi Museum</text></g>
          <g class="poi ed"><text x="1339.500" y="993.800">Vaughn College of Aeronautics</text><text x="1339.500" y="1001">and Technology</text></g>
          <g class="poi air"><text x="1419" y="955.500">Laguardia Airport</text></g>
          <g class="poi food"><text x="152.500" y="991">Legends Diner</text><text x="522" y="891.500">P.F. Chang's</text><text x="454.500" y="935.500">Touch Of Spice</text><text x="497.500" y="968.500">Molo's</text><text x="886" y="924">Dorrian's Red Hand</text><text x="842.500" y="969.500">J.G. Melon</text><text x="884.500" y="967">Sushi of Gari</text><text x="1211" y="908">SingleCut Beersmiths</text></g>
          <g class="poi hos"><text x="113.500" y="797.500">Meadowlands Hospital</text><text x="113.500" y="805.300">Medical Center</text><text x="610" y="775">Palisades</text><text x="610" y="783">Medical Center</text><text x="884" y="812.500">Mount Sinai Hospital</text><text x="951" y="975">Coler-Goldwater</text><text x="951" y="983">Specialty Hospital</text></g>
          <g class="poi park"><text x="803.500" y="872">Central Park</text></g>
          <g class="wat"><text transform="translate(660 779) rotate(-63)">Hudson River</text><text transform="translate(995 816) rotate(-64)">Harlem River</text><text transform="translate(1136 796) rotate(-53)">Hell Gate</text><text transform="translate(1076 866) rotate(-40)">Hell Gate</text><text transform="translate(1208 741) rotate(-31)">East River</text><text transform="translate(1332 712) rotate(9)">East River</text><text transform="translate(1482 727) rotate(-3)">East River</text></g>
          <g class="str"><text transform="translate(194 722) rotate(37)">Hagan Pl</text><text transform="translate(229 727) rotate(34)">Franklin St</text><text transform="translate(197 742) rotate(43)">Born St</text><text transform="translate(268 731) rotate(-56)">Koelle Blvd</text><text transform="translate(231 771) rotate(50)">Gail Pl</text><text transform="translate(153.500 776) rotate(-52)">8th St</text><text transform="translate(188 776) rotate(41)" class="s2x">Front St</text><text transform="translate(177 788) rotate(-53)">5th St</text><text transform="translate(187.500 794) rotate(-53)">3rd St</text><text transform="translate(198.500 801) rotate(-53)">1st St</text><text transform="translate(145 849) rotate(-72)">Enterprise Ave N</text><text transform="translate(233 861) rotate(-51)" class="s2x">Windsor Dr</text><text transform="translate(165 909) rotate(34)" class="s2x">Secaucus Rd</text><text transform="translate(245 982) rotate(28)">16th St</text><text transform="translate(76 992) rotate(54)" class="s2x">Castle Rd</text><text transform="translate(107 997) rotate(68)" class="s2x">Seaview</text><text transform="translate(226 999) rotate(70)" class="s2x">Secaucus</text><text transform="translate(331 732) rotate(-56)" class="s2x">New Jersey Turnpike</text><text transform="translate(397 733) rotate(-64)" class="s2x">W Side Ave</text><text transform="translate(405 783) rotate(-69)" class="s2x">Tonnelle Ave</text><text transform="translate(337 857) rotate(-64)" class="s2x">W Side Ave</text><text transform="translate(343 901) rotate(-60)">Liberty Ave</text><text transform="translate(411 834) rotate(32)" class="s2x">51st St</text><text transform="translate(401 860) rotate(31)">46th St</text><text transform="translate(427 920) rotate(29)">42nd St</text><text transform="translate(419 931) rotate(30)">40th St</text><text transform="translate(390 936) rotate(31)">36th St</text><text transform="translate(417 951) rotate(31)">37th St</text><text transform="translate(376 944) rotate(33)">Sip St</text><text transform="translate(409 968) rotate(30)">34th St</text><text transform="translate(367 979) rotate(32)">27th St</text><text transform="translate(363 993) rotate(32)">24th St</text><text transform="translate(345 996) rotate(32)">22nd St</text><text transform="translate(389 982) rotate(-66)" class="s2x">New York Ave</text><text transform="translate(434 908) rotate(30)">44th St</text><text transform="translate(477 917) rotate(33)">Fulton St</text><text transform="translate(452 751) rotate(31)">64th St</text><text transform="translate(521 733) rotate(31)">73rd St</text><text transform="translate(543 731) rotate(31)">75th St</text><text transform="translate(569 736) rotate(31)">77th St</text><text transform="translate(499 757) rotate(31)">68th St</text><text transform="translate(538 759) rotate(31)">71st St</text><text transform="translate(484 766) rotate(31)">66th St</text><text transform="translate(533 772) rotate(31)">69th St</text><text transform="translate(469 794) rotate(31)">61st St</text><text transform="translate(459 804) rotate(31)" class="s2x">60th St</text><text transform="translate(520 798) rotate(31)">65th St</text><text transform="translate(540 821) rotate(31)">63rd St</text><text transform="translate(447 835) rotate(31)">55th St</text><text transform="translate(494 842) rotate(31)">58th St</text><text transform="translate(474 879) rotate(31)">51st St</text>
          <text transform="translate(783 744) rotate(29)">W 100th St</text><text transform="translate(785 765) rotate(29)">W 97th St</text><text transform="translate(781 777) rotate(29)">95th St</text><text transform="translate(760 786) rotate(29)">W 92nd St</text><text transform="translate(760 807) rotate(29)">W 89th St</text><text transform="translate(747 850) rotate(29)">W 82nd St</text><text transform="translate(715 913) rotate(29)">W 71st St</text><text transform="translate(709 923) rotate(29)">W 69th St</text><text transform="translate(703 933) rotate(29)">W 67th St</text><text transform="translate(633 951) rotate(31)">59th St</text><text transform="translate(654 984) rotate(29)">W 56th St</text><text transform="translate(628 1001) rotate(31)">51st St</text><text transform="translate(743 782) rotate(-60)" class="s2x">W End Ave</text><text transform="translate(710 806) rotate(-76)" class="s2x">Riverside Dr</text><text transform="translate(895 767) rotate(-63)" class="s2x">5th Ave</text><text transform="translate(945 785) rotate(29)" class="s2x">E 106th St</text><text transform="translate(938 803) rotate(29)">E 104th St</text><text transform="translate(962 826) rotate(29)">E 102nd St</text><text transform="translate(893 827) rotate(29)">E 97th St</text><text transform="translate(917 826) rotate(29)">E 99th St</text><text transform="translate(860 863) rotate(29)">E 88th St</text><text transform="translate(937 860) rotate(-63)" class="s2x">1st Ave</text><text transform="translate(899 951) rotate(29)">E 80th St</text><text transform="translate(940 924) rotate(-66)">Ave B</text><text transform="translate(942 939) rotate(-60)" class="s2x">FDR Dr</text><text transform="translate(1021 767) rotate(-40)" class="s2x">FDR Dr</text>
          <text transform="translate(1144 856) rotate(45)">20th Ave</text><text transform="translate(1158 907) rotate(-48)">29th St</text><text transform="translate(1171 923) rotate(-48)">33rd St</text><text transform="translate(1007 918) rotate(20)">26th Ave</text><text transform="translate(1011 929) rotate(24)">27th Ave</text><text transform="translate(1052 934) rotate(-69)">18th St</text><text transform="translate(1071 950) rotate(-57)">23rd St</text><text transform="translate(1104 935) rotate(43)">24th Ave</text><text transform="translate(1148 957) rotate(-48)">35th St</text><text transform="translate(1164 958) rotate(-48)">37th St</text><text transform="translate(1183 965) rotate(-48)">41st St</text><text transform="translate(1202 961) rotate(-48)">43rd St</text><text transform="translate(1221 969) rotate(-48)">47th St</text><text transform="translate(1231 977) rotate(-48)">49th St</text><text transform="translate(1160 975) rotate(12)" class="s2x">Astoria Blvd</text><text transform="translate(1035 973) rotate(34)">30th Rd</text><text transform="translate(1014 993) rotate(36)">31st Dr</text><text transform="translate(1057 997) rotate(-72)">Crescent St</text><text transform="translate(1132 1001) rotate(-55)">28th St</text><text transform="translate(1243 979) rotate(85)">73rd St</text><text transform="translate(1255 978) rotate(85)">75th St</text><text transform="translate(1266 967) rotate(85)">77th St</text><text transform="translate(1278 975) rotate(85)">79th St</text><text transform="translate(1376 972) rotate(-84)">94th St</text></g>
          <g><use href="#mta" x="845.300" y="706" width="9.400" height="9.400"/><use href="#mta" x="824.800" y="742.300" width="9.400" height="9.400"/><use href="#mta" x="881.800" y="721.800" width="9.400" height="9.400"/><use href="#mta" x="951.800" y="721.300" width="9.400" height="9.400"/><use href="#mta" x="757.300" y="756.800" width="9.400" height="9.400"/><use href="#mta" x="805.800" y="777.800" width="9.400" height="9.400"/><use href="#mta" x="913.300" y="791.300" width="9.400" height="9.400"/><use href="#mta" x="778.300" y="827.300" width="9.400" height="9.400"/><use href="#mta" x="916.800" y="842.300" width="9.400" height="9.400"/><use href="#mta" x="706.300" y="845.300" width="9.400" height="9.400"/><use href="#mta" x="757.300" y="865.300" width="9.400" height="9.400"/><use href="#mta" x="862.300" y="882.300" width="9.400" height="9.400"/><use href="#mta" x="694.300" y="885.800" width="9.400" height="9.400"/><use href="#mta" x="732.800" y="909.300" width="9.400" height="9.400"/><use href="#mta" x="807.800" y="980.300" width="9.400" height="9.400"/><use href="#mta" x="1139.800" y="920.300" width="9.400" height="9.400"/><use href="#mta" x="1104.300" y="958.800" width="9.400" height="9.400"/><use href="#mta" x="1078.800" y="989.800" width="9.400" height="9.400"/></g>
          <use href="#train" x="377" y="813.500" width="8.500" height="9"/><use href="#train" x="439" y="861" width="8.500" height="9"/><use href="#train" x="497.500" y="912.500" width="8.500" height="9"/><use href="#train" x="841.500" y="977.500" width="8.500" height="9"/>
          <use href="#is" x="95.500" y="706" width="11" height="10"/><use href="#is" x="212.500" y="887" width="11" height="10"/><use href="#is" x="1098.500" y="707" width="14" height="11"/><use href="#is" x="1045" y="792.500" width="14" height="11"/><use href="#is" x="1064.500" y="916" width="14" height="11"/>
          <use href="#us" x="352" y="852.500" width="14" height="11"/><use href="#us" x="315" y="917" width="14" height="11"/><use href="#us" x="292" y="966" width="14" height="11"/>
          <g class="box"><circle cx="162.500" cy="715" r="5.200"/><circle cx="635.500" cy="922" r="5.200"/><circle cx="614.500" cy="972.500" r="5.200"/><rect x="486.500" y="708.500" width="13" height="7.500" rx="1"/><rect x="431.500" y="789" width="13" height="7.500" rx="1"/><rect x="580.500" y="793.800" width="13" height="7.500" rx="1"/><rect x="732.500" y="731.500" width="10" height="8" rx="1"/><rect x="686" y="819" width="10" height="8" rx="1"/><rect x="337.500" y="959.500" width="13" height="7.500" rx="1"/><rect x="301.500" y="979.500" width="13" height="7.500" rx="1"/><rect x="1345.500" y="960" width="14.500" height="7.500" rx="1"/></g>
          <g class="sh"><text x="162.500" y="717">3</text><text x="635.500" y="924">9A</text><text x="614.500" y="974.500">9A</text><text x="493" y="714.300">501</text><text x="438" y="794.900">501</text><text x="587" y="799.700">505</text><text x="737.500" y="737.600">HH</text><text x="691" y="825.100">HH</text><text x="344" y="965.400">501</text><text x="308" y="985.400">681</text><text x="1352.800" y="965.800">GCP</text><text x="359" y="860">1·9</text><text x="322" y="924.500">1·9</text><text x="299" y="973.500">1·9</text></g>
          <g class="sh wh"><text x="101" y="713.500">95</text><text x="218" y="894.300">95</text><text x="1105.500" y="715">278</text><text x="1052" y="800.300">278</text><text x="1071.500" y="923.800">278</text></g>
          <use href="#cart" x="309.500" y="770" width="5.500" height="5"/><use href="#cart" x="355" y="907.500" width="5.500" height="5"/><use href="#cart" x="347.500" y="936" width="5.500" height="5"/><use href="#cart" x="462" y="834" width="5.500" height="5"/><use href="#cart" x="1006" y="728" width="5.500" height="5"/><use href="#cart" x="1123" y="860" width="5.500" height="5"/>
          <use href="#bed" x="174.500" y="734" width="5" height="4"/><use href="#bed" x="262.500" y="797" width="5" height="4"/><use href="#bed" x="273.500" y="868" width="5" height="4"/><use href="#bed" x="439.500" y="715" width="5" height="4"/><use href="#bed" x="692.500" y="865.500" width="5" height="4"/><use href="#bed" x="1181.500" y="985.500" width="5" height="4"/><use href="#bed" x="1403.500" y="963" width="5.500" height="4"/><use href="#bed" x="1423" y="991.500" width="5.500" height="4"/>
          <use href="#fork" x="150.500" y="976" width="5" height="7"/><use href="#fork" x="520" y="877" width="5" height="7"/><use href="#fork" x="452" y="920.500" width="5" height="7"/><use href="#fork" x="495" y="953" width="5" height="7"/><use href="#fork" x="883.500" y="909.500" width="5" height="7"/><use href="#fork" x="840" y="954" width="5" height="7"/><use href="#fork" x="882" y="952" width="5" height="7"/><path d="M1209 894h4l-.6 5.500h-2.800z" fill="#cf6a34"/>
          <use href="#mus" x="746.300" y="870" width="5.500" height="5.500"/><use href="#mus" x="834.500" y="869.500" width="5.500" height="5.500"/><use href="#mus" x="790" y="953.500" width="5.500" height="5.500"/><use href="#mus" x="978" y="991" width="5.500" height="5.500"/>
          <use href="#med" x="109.800" y="783" width="7" height="7"/><use href="#med" x="606.500" y="761" width="7" height="7"/><use href="#med" x="881" y="798" width="7" height="7"/><use href="#med" x="948" y="960.500" width="7" height="7"/>
          <path d="M803.500 857c2-1 3.500 1 3 2 1 1.500-1 3-2.500 2.400l.6 2.600h-2l.6-2.600c-1.500.6-3.500-.7-2.600-2.400-.5-2 1.500-3 2.900-2z" fill="#2c7f22"/>
          <path d="M1330.500 786.500h4.500v5.500h-4.500zM1332 786.500v5.500M1333.600 786.500v5.500M1330.500 789.200h4.500" fill="none" stroke="#6e5340" stroke-width=".6"/>
          <path d="M1419 941.500v6.500M1415.800 945.300h6.400M1417.500 947.800h3" stroke="#4a5fcf" stroke-width="1.100"/>
          <path d="M1057 772.500c0-2 4-2 4 0zM1056 773h6v2h-6z" fill="#6e5340"/>
          <path d="M1033.500 830v-1.500c0-2.500 7-2.500 7 0v1.500M1033 827.500h8M1035.500 827v2M1038.500 827v2" transform="translate(0 -5.500)" fill="none" stroke="#6e5340" stroke-width=".7"/>
          <path d="M1336 982l4-1.500 4 1.500-4 1.500zM1337.500 983.500v2.200h5v-2.200" transform="translate(-.5 4.500)" fill="#7a6a12"/>
          <circle cx="302.500" cy="812.800" r="1" fill="#6e5340"/><path d="M760 988l2-2.500 4-.5-1 4h-4z" fill="#6e5340"/><path d="M996 974h4M998 974v-4M995.500 970.500c0-2.500 5-2.500 5 0z" fill="#6e5340" stroke="#6e5340" stroke-width=".5"/>
        </g>
      </svg>
    </div>
    <div class="track"><i></i></div>
  </div>
</div>
</body>
</html>
```

FILE: styles.css
```css
* { box-sizing: border-box; }
body { margin: 0; width: 2860px; height: 1974px; overflow: hidden; background: #fdfdfd; padding: 75px 112px 0; font-family: Inter, "Liberation Sans", sans-serif; }
.window { width: 2636px; height: 1751px; border-radius: 20px; overflow: hidden; background: #fff; box-shadow: 0 0 0 1px #b4b4b4, 0 0 60px rgba(0,0,0,.11), 0 36px 70px rgba(0,0,0,.38); }

.toolbar { height: 105px; background: #f7f7f7; display: flex; align-items: center; padding: 1px 0 0 40px; border-bottom: 1px solid #d8d8d8; }
.toolbar svg { display: block; flex: none; }
.lights { display: flex; gap: 16px; margin-right: 52px; }
.lights i { width: 24px; height: 24px; border-radius: 50%; border: 1px solid rgba(0,0,0,.12); }
.red { background: #ff5f57; }
.amber { background: #febc2e; }
.green { background: #28c840; }
.s3, .s2 { fill: none; stroke: #6c6c6c; stroke-linecap: round; stroke-linejoin: round; stroke-width: 3; }
.s2 { stroke-width: 2.4; }
.mid { stroke: #858585; }
.pale { stroke: #b9b9b9; }
.divider { width: 2px; height: 36px; background: #e6e6e6; margin-left: 12px; }
.i-down { margin-left: 10px; }
.i-back { margin-left: 50px; }
.i-fwd { margin-left: 54px; }
.i-pip { margin-left: 48px; }
.i-shield { margin-left: 41px; }
.address { width: 1066px; height: 56px; margin-left: 212px; border: 2px solid #d9d9d9; border-radius: 13px; display: flex; align-items: center; padding: 0 10px 0 213px; color: #4c4c4c; flex: none; }
.url { margin-left: 13px; font-size: 25.4px; letter-spacing: .03px; white-space: nowrap; position: relative; top: 1px; }
.url span { color: #707070; }
.reload { margin-left: auto; }
.i-dl { margin-left: 494px; }
.i-font { margin-left: 42px; width: 40px; font: italic 400 37px/38px "Liberation Serif", serif; letter-spacing: 5px; color: #0a5fe8; -webkit-text-stroke: .7px #0a5fe8; white-space: nowrap; }
.i-share { margin-left: 35px; position: relative; top: -3px; }
.i-plus { margin-left: 44px; }

.viewport { display: flex; height: 1646px; }
.page { width: 2606px; }
.track { width: 30px; background: #fafafa; border-left: 2px solid #e8e8e8; padding: 6px 0 0 6px; }
.track i { display: block; width: 16px; height: 973px; border-radius: 8px; background: #c1c1c1; }

.nav { height: 80px; background: #414042; color: #fff; display: flex; align-items: center; padding: 0 25px 0 24px; font-size: 32px; font-weight: 500; border-top: 1px solid #2a2a2b; -webkit-text-stroke: .4px #fff; }
.brand { margin-left: 18px; letter-spacing: -.15px; }
.cta { margin-left: auto; letter-spacing: -.05px; }

.intro { height: 1028px; padding: 68px 0 0 567px; color: #414042; }
h1 { margin: 0; font-size: 79px; line-height: 96px; font-weight: 700; white-space: nowrap; }
.l1 { letter-spacing: 3.35px; }
.l2 { letter-spacing: 3.85px; }
.l3 { letter-spacing: 2.4px; }
p { margin: 0 0 32px; font-size: 36px; line-height: 54px; font-weight: 500; white-space: nowrap; }
h1 + p { margin-top: 68px; }
.lead { letter-spacing: -.12px; }
a { border-bottom: 4px solid #414042; }
.actions { display: flex; align-items: center; margin-top: 56px; color: #212529; font-size: 31.5px; }
button { width: 345px; height: 96px; border: 0; background: #414042; color: #fff; font: 400 39.5px Inter, sans-serif; letter-spacing: 1.5px; padding: 0 0 2px; }
.actions svg { margin-left: 23px; }
.actions span { margin: 0 0 3px 8px; letter-spacing: -.55px; }

.map { display: block; }
.g path, .g circle { vector-effect: non-scaling-stroke; }
.w { fill: #75cff0; }
.rv { fill: none; stroke: #75cff0; stroke-linejoin: round; }
.mk { fill: none; stroke: #e5e4e0; stroke-width: 1.8; stroke-linejoin: round; }
.p { fill: #a9e08f; }
.p1 { fill: #b6e59e; }
.t { fill: #e9dcb6; }
.pat { fill: none; stroke: #fff; stroke-width: 1.1; }
.m { fill: none; stroke: #fff; stroke-width: 1.3; }
.r { fill: none; stroke: #fff; stroke-width: 4; stroke-linejoin: round; stroke-linecap: round; }
.b { fill: none; stroke: #fff; stroke-width: 6.5; stroke-linejoin: round; }
.rail { fill: none; stroke: #d4d3cb; stroke-width: 1.3; }
.yw { fill: none; stroke: #f3d062; }
.hill { fill: none; stroke: #d6d4cc; stroke-linejoin: round; }
.ramp { fill: none; stroke: #ffb27a; stroke-width: 1.4; stroke-linejoin: round; }
.case { fill: none; stroke: #fff; stroke-width: 9.5; stroke-linejoin: round; }
.h, .hh { fill: none; stroke: #ffa35c; stroke-width: 7; stroke-linejoin: round; }
.faded { stroke: #ffc08d; }
.pier { fill: none; stroke: #e5e4e0; stroke-width: 5; }
.pier2 { fill: none; stroke: #d3e0e0; stroke-width: 1.4; }
.dash { fill: none; stroke-width: 1; stroke-dasharray: 5 3; }
.run { fill: none; stroke: #c8cae0; stroke-linejoin: round; }

.labels { font-family: Roboto, sans-serif; }
.labels text { text-anchor: middle; paint-order: stroke; stroke: rgba(255,255,255,.6); stroke-width: .7px; stroke-linejoin: round; }
.city { font-size: 8.7px; font-weight: 500; fill: #000; }
.city .c2 { font-size: 7.6px; }
.hood { font-size: 6.3px; letter-spacing: .9px; fill: #65739f; }
.poi { font-size: 6.2px; fill: #725c4b; font-weight: 500; }
.food { fill: #c05a26; }
.hos { fill: #a34a6c; }
.ed { fill: #76671a; }
.air { fill: #4253c4; }
.park { fill: #2c7f22; }
.wat { font-size: 6.2px; font-style: italic; fill: #3e69b9; }
.labels .wat text { stroke: none; }
.str { font-size: 6px; fill: #333; }
.str .s2x { font-size: 6.9px; }
.box { fill: #fff; stroke: #444; stroke-width: .8; }
.sh { font-size: 5.4px; font-weight: 700; fill: #333; }
.sh.wh { fill: #fff; }
.labels .sh text { stroke: none; }
.mta-t { font: 700 10px Roboto, sans-serif; fill: #fff; text-anchor: middle; stroke: none; letter-spacing: -1px; }
```
